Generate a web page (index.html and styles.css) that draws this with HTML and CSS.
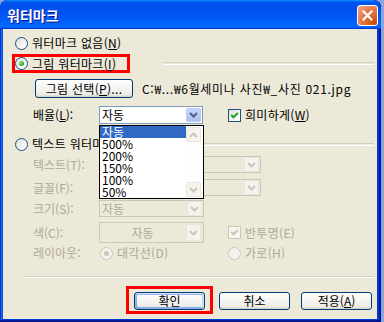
FILE: index.html
```html
<!DOCTYPE html>
<html lang="ko">
<head>
<meta charset="utf-8">
<title>워터마크</title>
<link rel="stylesheet" href="styles.css">
</head>
<body>
<div class="window">
    <div class="titleBar">
        <span class="titleText">워터마크</span>
        <span class="closeButton">
            <svg width="11" height="11" viewBox="0 0 11 11"><path d="M1.5 1.5l8 8M9.5 1.5l-8 8" stroke="#fff" stroke-width="2.2" stroke-linecap="square"/></svg>
        </span>
    </div>
    <div class="client">
        <div class="row rowNone">
            <span class="option"><span class="radio"></span>워터마크 없음(<u>N</u>)</span>
        </div>
        <div class="row rowPicture">
            <span class="option marked pictureMark"><span class="radio on"></span>그림 워터마크(<u>I</u>)</span>
            <span class="etched"></span>
        </div>
        <div class="row rowPick">
            <span class="button pickButton">그림 선택(<u>P</u>)...</span>
            <span class="path">C:₩...₩6월세미나 사진₩_사진 021.jpg</span>
        </div>
        <div class="row field rowScale">
            <span class="label">배율(<u>L</u>):</span>
            <div class="combo scaleCombo">
                <span class="value">자동</span>
                <span class="dropButton"><svg width="9" height="6" viewBox="0 0 9 6"><path d="M1 1l3.5 3.5L8 1" stroke="#4d6185" stroke-width="2" fill="none"/></svg></span>
                <div class="dropList">
                    <ul class="items">
                        <li class="selected">자동</li>
                        <li>500%</li>
                        <li>200%</li>
                        <li>150%</li>
                        <li>100%</li>
                        <li>50%</li>
                    </ul>
                    <div class="scrollBar">
                        <span class="scrollButton"><svg width="9" height="6" viewBox="0 0 9 6"><path d="M1 5l3.5-3.5L8 5" stroke="#c9c7ba" stroke-width="2" fill="none"/></svg></span>
                        <span class="scrollButton"><svg width="9" height="6" viewBox="0 0 9 6"><path d="M1 1l3.5 3.5L8 1" stroke="#c9c7ba" stroke-width="2" fill="none"/></svg></span>
                    </div>
                </div>
            </div>
            <span class="option"><span class="checkbox"><svg width="9" height="9" viewBox="0 0 9 9"><path d="M1.2 4l2.3 2.3L7.8 2" stroke="#21a121" stroke-width="2" fill="none"/></svg></span>희미하게(<u>W</u>)</span>
        </div>
        <div class="row rowText">
            <span class="option"><span class="radio"></span>텍스트 워터마크(<u>X</u>)</span>
            <span class="etched"></span>
        </div>
        <div class="row field disabled rowInput">
            <span class="label">텍스트(T):</span>
            <div class="combo wideCombo">
                <span class="value"></span>
                <span class="dropButton"><svg width="9" height="6" viewBox="0 0 9 6"><path d="M1 1l3.5 3.5L8 1" stroke="#c9c7ba" stroke-width="2" fill="none"/></svg></span>
            </div>
        </div>
        <div class="row field disabled rowFont">
            <span class="label">글꼴(F):</span>
            <div class="combo wideCombo">
                <span class="value"></span>
                <span class="dropButton"><svg width="9" height="6" viewBox="0 0 9 6"><path d="M1 1l3.5 3.5L8 1" stroke="#c9c7ba" stroke-width="2" fill="none"/></svg></span>
            </div>
        </div>
        <div class="row field disabled rowSize">
            <span class="label">크기(S):</span>
            <div class="combo narrowCombo">
                <span class="value">자동</span>
                <span class="dropButton"><svg width="9" height="6" viewBox="0 0 9 6"><path d="M1 1l3.5 3.5L8 1" stroke="#c9c7ba" stroke-width="2" fill="none"/></svg></span>
            </div>
        </div>
        <div class="row field disabled rowColor">
            <span class="label">색(C):</span>
            <div class="colorPicker">
                <span class="value">자동</span>
                <span class="dropButton"><svg width="9" height="6" viewBox="0 0 9 6"><path d="M1 1l3.5 3.5L8 1" stroke="#c9c7ba" stroke-width="2" fill="none"/></svg></span>
            </div>
            <span class="option"><span class="checkbox"><svg width="9" height="9" viewBox="0 0 9 9"><path d="M1.2 4l2.3 2.3L7.8 2" stroke="#c9c7ba" stroke-width="2" fill="none"/></svg></span>반투명(E)</span>
        </div>
        <div class="row field disabled rowLayout">
            <span class="label">레이아웃:</span>
            <span class="option diagonal"><span class="radio on"></span>대각선(D)</span>
            <span class="option"><span class="radio"></span>가로(H)</span>
        </div>
        <div class="separator"></div>
        <div class="row buttons">
            <span class="marked okMark"><span class="button default">확인</span></span>
            <span class="button">취소</span>
            <span class="button">적용(<u>A</u>)</span>
        </div>
    </div>
</div>
</body>
</html>
```

FILE: styles.css
```css
html, body {
	margin: 0;
	padding: 0;
}
body {
	width: 384px;
	height: 322px;
	overflow: hidden;
	background-color: #8da4d8;
	font-family: "Noto Sans CJK KR", sans-serif;
	font-size: 12px;
	color: #000;
}
u {
	text-underline-offset: 1px;
}

/* window frame */
.window {
	display: flex;
	flex-direction: column;
	width: 381px;
	height: 322px;
	box-sizing: border-box;
	border-radius: 8px 8px 0 0;
	background-color: #0831d9;
	box-shadow: inset -1px -1px #00138c, inset 1px 1px #0831d9, inset -2px -2px #001ea0, inset 2px 2px #166aee, inset -3px -3px #003bda, inset 3px 3px #0855dd;
	overflow: hidden;
}
.titleBar {
	display: flex;
	align-items: center;
	justify-content: space-between;
	height: 29px;
	flex: none;
	padding: 0 3px 0 7px;
	border-radius: 8px 8px 0 0;
	background: linear-gradient(180deg, #0997ff, #0053ee 8%, #0050ee 40%, #0066ff 88%, #0066ff 93%, #005bff 95%, #003dd7 96%, #003dd7);
}
.titleText {
	color: #fff;
	font-weight: bold;
	font-size: 14px;
	line-height: 14px;
	text-shadow: 1px 1px #0f1089;
	margin-top: 1px;
}
.closeButton {
	display: flex;
	align-items: center;
	justify-content: center;
	width: 21px;
	height: 21px;
	box-sizing: border-box;
	border: 1px solid #fff;
	border-radius: 3px;
	background: radial-gradient(circle at 85% 85%, #cc4600 0%, #dc6527 25%, #e57d4f 60%, #f0a085 90%);
	margin-top: 1px;
}

.client {
	flex: 1;
	display: flex;
	flex-direction: column;
	margin: 0 4px 3px 3px;
	padding: 7px 3px 0 12px;
	background-color: #ece9d8;
}

/* rows */
.row {
	display: flex;
	align-items: center;
	line-height: 14px;
	white-space: nowrap;
}
.field {
	display: grid;
	grid-template-columns: 66px 129px auto;
	align-items: center;
	padding-left: 18px;
}
.rowNone { height: 14px; }
.rowPicture { height: 25px; margin-top: 1px; }
.rowPick { height: 19px; margin-top: 3px; padding-left: 20px; }
.rowScale { height: 18px; margin-top: 8px; }
.rowText { height: 14px; margin-top: 13px; }
.rowInput { height: 17px; margin-top: 5px; }
.rowFont { height: 17px; margin-top: 6px; }
.rowSize { height: 17px; margin-top: 4px; }
.rowColor { height: 21px; margin-top: 5px; }
.rowLayout { height: 14px; margin-top: 3px; }

.disabled {
	color: #aca899;
}

.option {
	display: flex;
	align-items: center;
	letter-spacing: 0.3px;
}
.marked {
	border: 3px solid #ff0000;
}
.pictureMark {
	height: 19px;
	width: 118px;
	box-sizing: border-box;
	margin-left: -3px;
}

.etched {
	flex: 1;
	height: 1px;
	border-top: 1px solid #d0d0bf;
	border-bottom: 1px solid #fff;
	margin-left: 33px;
}
.rowText .etched {
	margin-left: 20px;
}

/* radio and checkbox */
.radio {
	display: flex;
	align-items: center;
	justify-content: center;
	flex: none;
	width: 13px;
	height: 13px;
	box-sizing: border-box;
	margin-right: 4px;
	border: 1px solid #1c5180;
	border-radius: 50%;
	background: linear-gradient(135deg, #dcdcd7, #fff 85%);
}
.radio.on::after {
	content: "";
	width: 5px;
	height: 5px;
	border-radius: 50%;
	background: radial-gradient(circle at 35% 35%, #8be88b, #21a121 70%);
}
.disabled .radio {
	border-color: #cac8bb;
	background: #f3f2ec;
}
.disabled .radio.on::after {
	background: #cac8bb;
}
.diagonal {
	margin-left: 1px;
}
.checkbox {
	display: flex;
	align-items: center;
	justify-content: center;
	flex: none;
	width: 13px;
	height: 13px;
	box-sizing: border-box;
	margin-right: 4px;
	border: 1px solid #1c5180;
	background: linear-gradient(135deg, #dcdcd7, #fff 85%);
}
.disabled .checkbox {
	border-color: #cac8bb;
	background: #f6f5f0;
}

/* buttons */
.button {
	display: inline-flex;
	align-items: center;
	justify-content: center;
	box-sizing: border-box;
	width: 71px;
	height: 18px;
	border: 1px solid #003c74;
	border-radius: 3px;
	background: linear-gradient(180deg, #fff, #ecebe6 86%, #d6d0c5);
	line-height: 14px;
}
.button.default {
	box-shadow: inset -1px 1px #cee7ff, inset 1px 2px #98b8ea, inset -2px 2px #bcd4f6, inset 1px -1px #89ade4, inset 2px -2px #89ade4;
}
.pickButton {
	width: 98px;
	height: 19px;
	letter-spacing: 0.3px;
}
.path {
	margin-left: 9px;
	letter-spacing: 0.7px;
}

/* combo boxes */
.combo {
	position: relative;
	display: flex;
	align-items: center;
	box-sizing: border-box;
	height: 18px;
	border: 1px solid #7f9db9;
	background-color: #fff;
}
.combo .value {
	flex: 1;
	padding-left: 2px;
}
.dropButton {
	display: flex;
	align-items: center;
	justify-content: center;
	box-sizing: border-box;
	width: 15px;
	height: 14px;
	margin: 0 1px;
	border: 1px solid #bacbf9;
	border-radius: 2px;
	background: linear-gradient(180deg, #c5d5fb, #abbff3);
}
.scaleCombo {
	width: 104px;
}
.disabled .combo {
	border-color: #c9c7ba;
	background-color: #ece9d8;
	height: 17px;
}
.disabled .dropButton {
	height: 15px;
	border-color: #e8e6da;
	background: #f4f3ee;
}
.wideCombo {
	width: 162px;
}
.narrowCombo {
	width: 105px;
}
.colorPicker {
	display: flex;
	align-items: center;
	box-sizing: border-box;
	width: 105px;
	height: 21px;
	border: 1px solid #c9c7ba;
}
.colorPicker .value {
	flex: 1;
	text-align: center;
}
.colorPicker .dropButton {
	height: 17px;
	margin-right: 2px;
}

/* open list of the scale combo */
.dropList {
	position: absolute;
	z-index: 10;
	top: 18px;
	left: -1px;
	display: flex;
	width: 105px;
	height: 74px;
	box-sizing: border-box;
	border: 1px solid #000;
	background-color: #fff;
	color: #000;
}
.items {
	list-style: none;
	margin: 0;
	padding: 0;
	width: 86px;
}
.items li {
	height: 12px;
	line-height: 12px;
	padding-left: 2px;
	font-size: 12px;
}
.items li.selected {
	background-color: #316ac5;
	color: #fff;
}
.scrollBar {
	display: flex;
	flex-direction: column;
	justify-content: space-between;
	width: 17px;
	padding: 1px 1px 1px 0;
	box-sizing: border-box;
	background-color: #fdfdfb;
}
.scrollButton {
	display: flex;
	align-items: center;
	justify-content: center;
	width: 15px;
	height: 15px;
	box-sizing: border-box;
	border: 1px solid #e8e6da;
	border-radius: 2px;
	background: #f4f3ee;
}

/* bottom */
.separator {
	height: 0;
	margin: 16px 0 0 10px;
	border-top: 1px solid #d0d0bf;
	border-bottom: 1px solid #fff;
}
.buttons {
	justify-content: flex-end;
	align-items: flex-start;
	height: 28px;
	margin-top: 8px;
	margin-right: 2px;
}
.okMark {
	padding: 3px 5px 1px 5px;
}
.buttons > .button {
	margin-top: 6px;
	margin-left: 6px;
}
.buttons > .button:last-child {
	margin-left: 11px;
}
```
